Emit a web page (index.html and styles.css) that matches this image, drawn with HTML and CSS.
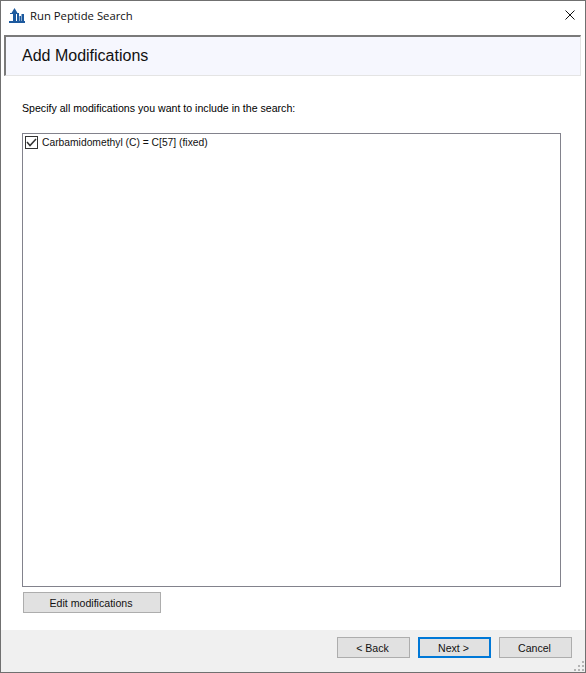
FILE: index.html
```html
<!DOCTYPE html>
<html lang="en">
<head>
<meta charset="utf-8">
<title>Run Peptide Search</title>
<link rel="stylesheet" href="styles.css">
</head>
<body>
<div class="window">
  <div class="titlebar">
    <svg class="app-icon" width="16" height="15" viewBox="0 0 16 15">
      <path fill="#1d5a9e" d="M0 15h16v-2H0zM4 13h3V5h1.500L5.500 0 2.500 5H4zM1 6h9V5H1zM8 13h2V6H8zM10.500 13H12V8h-1.500zM12.500 13H15V6h-2.500z"/>
    </svg>
    <span class="title">Run Peptide Search</span>
    <svg class="close" width="10" height="10" viewBox="0 0 10 10">
      <path d="M.5.5l9 9M9.500.5l-9 9" stroke="#111" stroke-width="1" fill="none"/>
    </svg>
  </div>
  <div class="header"><h1>Add Modifications</h1></div>
  <div class="content">
    <p class="prompt">Specify all modifications you want to include in the search:</p>
    <div class="list">
      <label class="item">
        <span class="check">
          <svg width="11" height="9" viewBox="0 0 11 9"><path d="M1 4l3 3.500L10 1" stroke="#333" stroke-width="1.500" fill="none"/></svg>
        </span>
        <span class="item-label">Carbamidomethyl (C) = C[57] (fixed)</span>
      </label>
    </div>
    <button class="btn edit">Edit modifications</button>
  </div>
  <div class="footer">
    <button class="btn">&lt; Back</button>
    <button class="btn primary">Next &gt;</button>
    <button class="btn">Cancel</button>
    <svg class="grip" width="11" height="11" viewBox="0 0 11 11">
      <path fill="#b4b4b4" d="M8 0h2v2H8zM4 4h2v2H4zM8 4h2v2H8zM0 8h2v2H0zM4 8h2v2H4zM8 8h2v2H8z"/>
    </svg>
  </div>
</div>
</body>
</html>
```
FILE: styles.css
```css
* { box-sizing: border-box; }
html, body { margin: 0; padding: 0; }
body {
  width: 586px;
  height: 673px;
  font-family: "Liberation Sans", Arial, sans-serif;
  font-size: 10.600px;
  color: #000;
  background: #fff;
}
.window {
  width: 586px;
  height: 673px;
  display: flex;
  flex-direction: column;
  border: 1px solid #707070;
  background: #fff;
}
.titlebar {
  flex: none;
  height: 34px;
  display: flex;
  align-items: flex-start;
  padding: 7px 10px 0 8px;
  gap: 5px;
}
.app-icon { flex: none; }
.title {
  flex: 1;
  font-family: "Open Sans", sans-serif;
  font-size: 11.300px;
  line-height: 15px;
  color: #111;
}
.close { flex: none; margin-top: 2px; }
.header {
  flex: none;
  height: 41px;
  margin: 0 4px 0 3px;
  background: #f6f7fe;
  border-style: solid;
  border-color: #7a7a7a #e4e4e4 #e4e4e4 #7a7a7a;
  border-width: 2px 1px 1px 2px;
  display: flex;
  align-items: center;
  padding-left: 16px;
}
h1 {
  margin: 0;
  font-size: 16px;
  font-weight: 400;
  color: #111;
}
.content {
  flex: 1;
  min-height: 0;
  display: flex;
  flex-direction: column;
  padding: 26px 24px 17px 21px;
}
.prompt {
  flex: none;
  height: 13px;
  margin: 0 0 18px;
  line-height: 13px;
}
.list {
  flex: 1;
  min-height: 0;
  border: 1px solid #82828c;
  background: #fff;
  padding: 1px;
}
.item {
  display: flex;
  align-items: center;
  gap: 4px;
  height: 14px;
  padding: 0 0 0 1px;
  color: #111;
}
.item-label { font-size: 10.300px; }
.check {
  width: 13px;
  height: 13px;
  border: 1px solid #333;
  display: flex;
  align-items: center;
  justify-content: center;
  background: #fff;
}
.btn {
  font-family: "Liberation Sans", Arial, sans-serif;
  font-size: 10.600px;
  color: #111;
  width: 73px;
  height: 21px;
  padding: 0 2px 0 0;
  border: 1px solid #adadad;
  background: #e1e1e1;
}
.edit {
  flex: none;
  width: 138px;
  margin: 5px 0 0 1px;
}
.footer {
  flex: none;
  height: 42px;
  background: #f0f0f0;
  display: flex;
  align-items: flex-start;
  justify-content: flex-end;
  gap: 8px;
  padding: 7px 13px 0 0;
  position: relative;
}
.primary { border: 2px solid #0078d7; }
.grip { position: absolute; right: 0; bottom: 0; }
```
